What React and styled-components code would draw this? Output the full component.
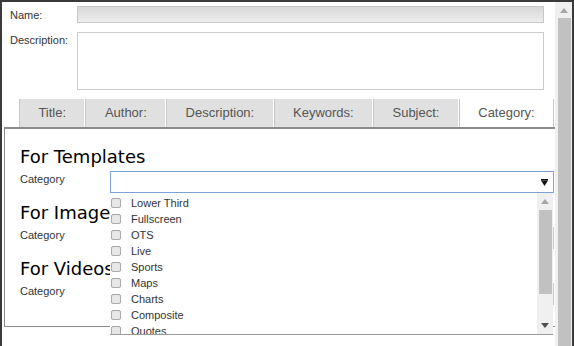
import React from "react";
import styled, { createGlobalStyle } from "styled-components";

const GlobalStyle = createGlobalStyle`
  html, body {
    margin: 0;
    padding: 0;
    background: #ffffff;
  }
  body {
    font-family: "Liberation Sans", Arial, sans-serif;
  }
  * {
    box-sizing: border-box;
  }
`;

const Frame = styled.div`
  display: flex;
  width: 574px;
  height: 346px;
  border-top: 2px solid #3a3a3a;
  border-left: 2px solid #3a3a3a;
  border-right: 2px solid #3a3a3a;
  overflow: hidden;
  background: #ffffff;
`;

const Content = styled.div`
  flex: 1;
  min-width: 0;
  overflow: hidden;
`;

const FieldRow = styled.div`
  display: flex;
  align-items: ${(props) => (props.$top ? "flex-start" : "center")};
  padding: 0 11px 0 8px;
  margin-top: ${(props) => props.$mt}px;
`;

const FieldLabel = styled.label`
  width: 67px;
  flex-shrink: 0;
  font-size: 11px;
  line-height: 14px;
  color: #333333;
  padding-top: ${(props) => (props.$top ? "1px" : "0")};
`;

const NameInput = styled.div`
  flex: 1;
  height: 17px;
  border: 1px solid #c9c9c9;
  background: linear-gradient(#d7d7d7, #eeeeee);
`;

const DescriptionArea = styled.div`
  flex: 1;
  height: 58px;
  border: 1px solid #cccccc;
  background: #ffffff;
`;

const TabBar = styled.div`
  display: flex;
  height: 28px;
  margin-top: 9px;
  padding-left: 16px;
`;

const Tab = styled.div`
  margin-left: 1px;
  padding: 0 18.4px;
  border-left: 1px solid #c8c8c8;
  border-right: ${(props) => (props.$active ? "1px solid #c8c8c8" : "none")};
  background: ${(props) => (props.$active ? "#ffffff" : "#e0e0e0")};
  font-size: 13px;
  line-height: 28px;
  color: #555555;
  white-space: nowrap;
`;

const Panel = styled.div`
  height: 200px;
  margin: 0 -8px 0 2px;
  padding: 18px 8px 0 15px;
  border: 1px solid #8a8a8a;
  border-top: 2px solid #8c8c8c;
`;

const Section = styled.div`
  margin-bottom: 10px;
`;

const Heading = styled.h2`
  margin: 0;
  font-family: "DejaVu Sans", Verdana, sans-serif;
  font-size: 18px;
  font-weight: normal;
  line-height: 20px;
  color: #000000;
`;

const CategoryRow = styled.div`
  display: flex;
  height: 26px;
`;

const CategoryLabel = styled.div`
  width: 90px;
  flex-shrink: 0;
  padding-top: 5px;
  font-size: 11px;
  line-height: 14px;
  color: #333333;
`;

const SelectWrap = styled.div`
  position: relative;
  flex: 1;
  margin-top: 4px;
  height: 22px;
`;

const SelectBox = styled.div`
  display: flex;
  align-items: center;
  justify-content: flex-end;
  height: 22px;
  padding-right: 5px;
  border: 1px solid ${(props) => (props.$focused ? "#7da2d4" : "#c8c8c8")};
  background: #ffffff;
`;

const Dropdown = styled.div`
  position: absolute;
  top: 100%;
  left: 0;
  right: 1px;
  height: 142px;
  display: flex;
  background: #ffffff;
  border-bottom: 1px solid #9a9a9a;
  z-index: 2;
  overflow: hidden;
`;

const OptionList = styled.div`
  flex: 1;
  padding: 2px 0 0 1px;
`;

const Option = styled.div`
  display: flex;
  align-items: center;
  height: 16px;
  font-size: 11px;
  color: #333333;
  white-space: nowrap;
`;

const Check = styled.span`
  width: 10px;
  height: 10px;
  margin-right: 10px;
  border: 1px solid #aaaaaa;
  border-radius: 2px;
  background: #e6e6e6;
`;

const Scrollbar = styled.div`
  display: flex;
  flex-direction: column;
  width: ${(props) => props.$w}px;
  flex-shrink: 0;
  background: #f0f0f0;
`;

const ArrowCell = styled.div`
  display: flex;
  align-items: center;
  justify-content: center;
  height: ${(props) => props.$h}px;
  flex-shrink: 0;
`;

const Thumb = styled.div`
  height: ${(props) => (props.$h ? `${props.$h}px` : "auto")};
  flex: ${(props) => (props.$h ? "none" : "1")};
  margin: 0 1px 0 ${(props) => props.$ml}px;
  background: #c1c1c1;
`;

const Spacer = styled.div`
  flex: 1;
`;

function Arrow({ down, color }) {
  return (
    <svg width="8" height="5" viewBox="0 0 8 5">
      <polygon
        points={down ? "0,0 8,0 4,5" : "4,0 8,5 0,5"}
        fill={color}
      />
    </svg>
  );
}

function Caret() {
  return (
    <svg width="7" height="7" viewBox="0 0 7 7">
      <rect x="0" y="0" width="7" height="1.5" fill="#111" />
      <polygon points="0,1.5 7,1.5 3.5,7" fill="#111" />
    </svg>
  );
}

const tabs = ["Title:", "Author:", "Description:", "Keywords:", "Subject:", "Category:"];
const sections = ["Templates", "Images", "Videos"];
const categories = [
  "Lower Third",
  "Fullscreen",
  "OTS",
  "Live",
  "Sports",
  "Maps",
  "Charts",
  "Composite",
  "Quotes",
];

function CategoryDropdown() {
  return (
    <Dropdown>
      <OptionList>
        {categories.map((name) => (
          <Option key={name}>
            <Check />
            {name}
          </Option>
        ))}
      </OptionList>
      <Scrollbar $w={16}>
        <ArrowCell $h={17}>
          <Arrow color="#a6a6a6" />
        </ArrowCell>
        <Thumb $h={84} $ml={2} />
        <Spacer />
        <ArrowCell $h={17}>
          <Arrow down color="#505050" />
        </ArrowCell>
      </Scrollbar>
    </Dropdown>
  );
}

export default function App() {
  return (
    <>
      <GlobalStyle />
      <Frame>
        <Content>
          <FieldRow $mt={4}>
            <FieldLabel>Name:</FieldLabel>
            <NameInput />
          </FieldRow>
          <FieldRow $top $mt={9}>
            <FieldLabel $top>Description:</FieldLabel>
            <DescriptionArea />
          </FieldRow>
          <TabBar>
            {tabs.map((tab) => (
              <Tab key={tab} $active={tab === "Category:"}>
                {tab}
              </Tab>
            ))}
          </TabBar>
          <Panel>
            {sections.map((section, i) => (
              <Section key={section}>
                <Heading>For {section}</Heading>
                <CategoryRow>
                  <CategoryLabel>Category</CategoryLabel>
                  <SelectWrap>
                    <SelectBox $focused={i === 0}>
                      <Caret />
                    </SelectBox>
                    {i === 0 && <CategoryDropdown />}
                  </SelectWrap>
                </CategoryRow>
              </Section>
            ))}
          </Panel>
        </Content>
        <Scrollbar $w={17}>
          <ArrowCell $h={16}>
            <Arrow color="#a6a6a6" />
          </ArrowCell>
          <Thumb $ml={3} />
        </Scrollbar>
      </Frame>
    </>
  );
}
